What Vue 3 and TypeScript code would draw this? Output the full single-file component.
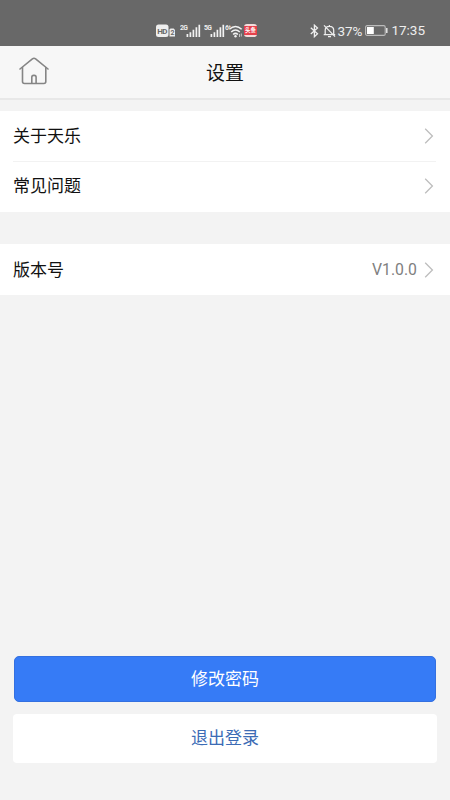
<script setup lang="ts">
interface SettingItem {
  label: string
  value?: string
}

const groups: SettingItem[][] = [
  [{ label: '关于天乐' }, { label: '常见问题' }],
  [{ label: '版本号', value: 'V1.0.0' }],
]
const networks: string[] = ['2G', '5G']
</script>

<template>
  <div class="screen">
    <div class="status">
      <div class="network">
        <svg class="hd" width="20" height="14" viewBox="0 0 20 14">
          <rect x="0" y="0.5" width="12.5" height="12.5" rx="2.5" fill="#eee" />
          <text x="1.3" y="10" class="hd-text">HD</text>
          <path d="M14.5 4.5h3.2l1.3 1.5v6.5h-5.5v-7z" fill="#eee" />
          <text x="14.4" y="11.3" class="sim-text">2</text>
        </svg>
        <svg v-for="name in networks" :key="name" class="signal" width="21" height="14" viewBox="0 0 21 14">
          <text x="0" y="5.6" class="net-text">{{ name }}</text>
          <path d="M7.4 10v3M10.4 8.2v4.8M13.4 5.7v7.3M16.4 3.2v9.8M19.3 .8v12.2" stroke="#f2f2f2" stroke-width="1.7" />
        </svg>
        <svg class="wifi" width="18" height="14" viewBox="0 0 18 14">
          <text x="0" y="5.9" class="net-text">6⁺</text>
          <g fill="none" stroke="#f2f2f2" stroke-width="1.5">
            <path d="M4.3 5.3Q10.5-.3 16.7 5.3" />
            <path d="M6.2 8Q10.5 4 14.8 8" />
            <path d="M8.1 10.5Q10.5 8.3 12.9 10.5" />
          </g>
          <circle cx="10.5" cy="12.2" r="1.2" fill="#f2f2f2" />
          <path d="M14.5 10v3M16.3 9.5v3" stroke="#ddd" stroke-width=".8" />
        </svg>
        <span class="news">头条</span>
      </div>
      <div class="device">
        <svg width="9" height="14" viewBox="0 0 9 14" fill="none" stroke="#eee" stroke-width="1.3">
          <path d="M.8 3.8 7.5 9.8 4.4 12.7V1.2l3.1 2.9L.8 10.1" />
        </svg>
        <svg class="bell" width="13" height="14" viewBox="0 0 13 14" fill="none" stroke="#eee" stroke-width="1.25">
          <path d="M2.2 10.6V6.2C2.2 3.7 4 2.3 6.4 2.3s4.3 1.5 4.3 4v4.3M.7 10.7h11.5M5 12.5h3M6.4 1v1.3M1 1.4l11 11.2" />
        </svg>
        <span class="percent">37%</span>
        <svg class="battery" width="23" height="11" viewBox="0 0 23 11">
          <rect x=".6" y=".6" width="19.6" height="9.8" rx="1.5" fill="none" stroke="#bbb" stroke-width="1.1" />
          <rect x="2" y="2" width="6.8" height="7" fill="#fff" />
          <path d="M21.8 3v5" stroke="#eee" stroke-width="1.4" />
        </svg>
        <span class="time">17:35</span>
      </div>
    </div>

    <header class="header">
      <svg class="home" width="30" height="28" viewBox="0 0 30 28" fill="none" stroke="#858585" stroke-width="1.6" stroke-linecap="round" stroke-linejoin="round">
        <path d="M1 12 13.4 1.8q1.6-1.2 3.2 0L29 12" />
        <path d="M3.5 10.6v13.9q0 2 2 2h19.3q2 0 2-2V10.6" />
        <path d="M12.8 26.3v-6.1q0-1.8 1.8-1.8h.7q1.8 0 1.8 1.8v6.1" />
      </svg>
      <h1 class="title">设置</h1>
    </header>

    <main class="content">
      <section v-for="(group, index) in groups" :key="index" class="group">
        <div v-for="item in group" :key="item.label" class="row">
          <span class="label">{{ item.label }}</span>
          <span v-if="item.value" class="value">{{ item.value }}</span>
          <svg class="chevron" width="10" height="16" viewBox="0 0 10 16" fill="none" stroke="#bdbdbd" stroke-width="1.3">
            <path d="M1.2 .8 8.4 8 1.2 15.2" />
          </svg>
        </div>
      </section>
    </main>

    <footer class="actions">
      <button class="button primary" type="button">修改密码</button>
      <button class="button plain" type="button">退出登录</button>
    </footer>
  </div>
</template>

<style>
body {
  margin: 0;
}
</style>

<style scoped>
.screen {
  width: 100%;
  height: 800px;
  display: flex;
  flex-direction: column;
  overflow: hidden;
  box-sizing: border-box;
  background: #f3f3f3;
  color: #111;
  font-family: Roboto, "Noto Sans CJK SC", sans-serif;
}
.status {
  height: 46px;
  flex: none;
  box-sizing: border-box;
  padding: 15px 25px 0 156px;
  display: flex;
  align-items: center;
  justify-content: space-between;
  background: #686868;
  color: #eee;
}
.network,
.device {
  display: flex;
  align-items: center;
}
.signal {
  margin-left: 4px;
}
.signal + .signal {
  margin-left: 3px;
}
.hd-text {
  font-size: 8px;
  font-weight: 700;
  fill: #686868;
  letter-spacing: -0.8px;
}
.sim-text {
  font-size: 7px;
  font-weight: 700;
  fill: #686868;
}
.net-text {
  font-size: 6.8px;
  font-weight: 700;
  fill: #eee;
  letter-spacing: -0.7px;
}
.news {
  width: 13px;
  height: 13px;
  margin-left: 1px;
  border-radius: 3px;
  background: linear-gradient(#f4dcdc 2px, #e6404b 2px, #e6404b 11px, #f4dcdc 11px);
  color: #fff;
  font-size: 5.5px;
  font-weight: 700;
  line-height: 13px;
  text-align: center;
}
.bell {
  margin-left: 4px;
}
.percent,
.time {
  font-size: 13.5px;
  line-height: 16px;
}
.percent {
  width: 26px;
  margin-left: 1px;
}
.battery {
  margin-left: 2px;
}
.time {
  margin-left: 3px;
  padding-bottom: 1px;
}
.header {
  height: 54px;
  flex: none;
  box-sizing: border-box;
  padding: 0 19px;
  display: grid;
  grid-template-columns: 30px 1fr 30px;
  align-items: center;
  border-bottom: 2px solid #e8e8e8;
  background: #f7f7f7;
}
.home {
  display: block;
  margin-top: -2px;
}
.title {
  margin: 0;
  padding-top: 4px;
  font-size: 19px;
  line-height: 28px;
  font-weight: 400;
  text-align: center;
}
.content {
  padding-top: 11px;
  display: flex;
  flex-direction: column;
  gap: 32px;
}
.group {
  padding: 0 14px 0 13px;
  background: #fff;
}
.row {
  height: 50px;
  display: flex;
  align-items: center;
}
.group:first-child {
  padding-bottom: 1px;
}
.group:last-child .row {
  height: 51px;
}
.row + .row {
  box-sizing: border-box;
  padding-bottom: 1px;
  border-top: 1px solid #f2f2f2;
}
.label {
  flex: 1;
  font-size: 17px;
  line-height: 24px;
}
.value {
  margin-right: 7px;
  color: #808080;
  font-size: 15.8px;
  line-height: 20px;
}
.chevron {
  margin-right: 2px;
}
.actions {
  margin-top: auto;
  padding: 0 13px 37px;
  display: flex;
  flex-direction: column;
  gap: 12px;
}
.button {
  border: 0;
  padding: 0;
  font: inherit;
  font-size: 17px;
  line-height: 24px;
}
.primary {
  height: 46px;
  margin: 0 1px;
  border: 1px solid #3470e0;
  border-radius: 5px;
  background: #367bf6;
  color: #fff;
}
.plain {
  height: 49px;
  padding-bottom: 1px;
  border-radius: 4px;
  background: #fff;
  color: #3c6cb5;
}
</style>
